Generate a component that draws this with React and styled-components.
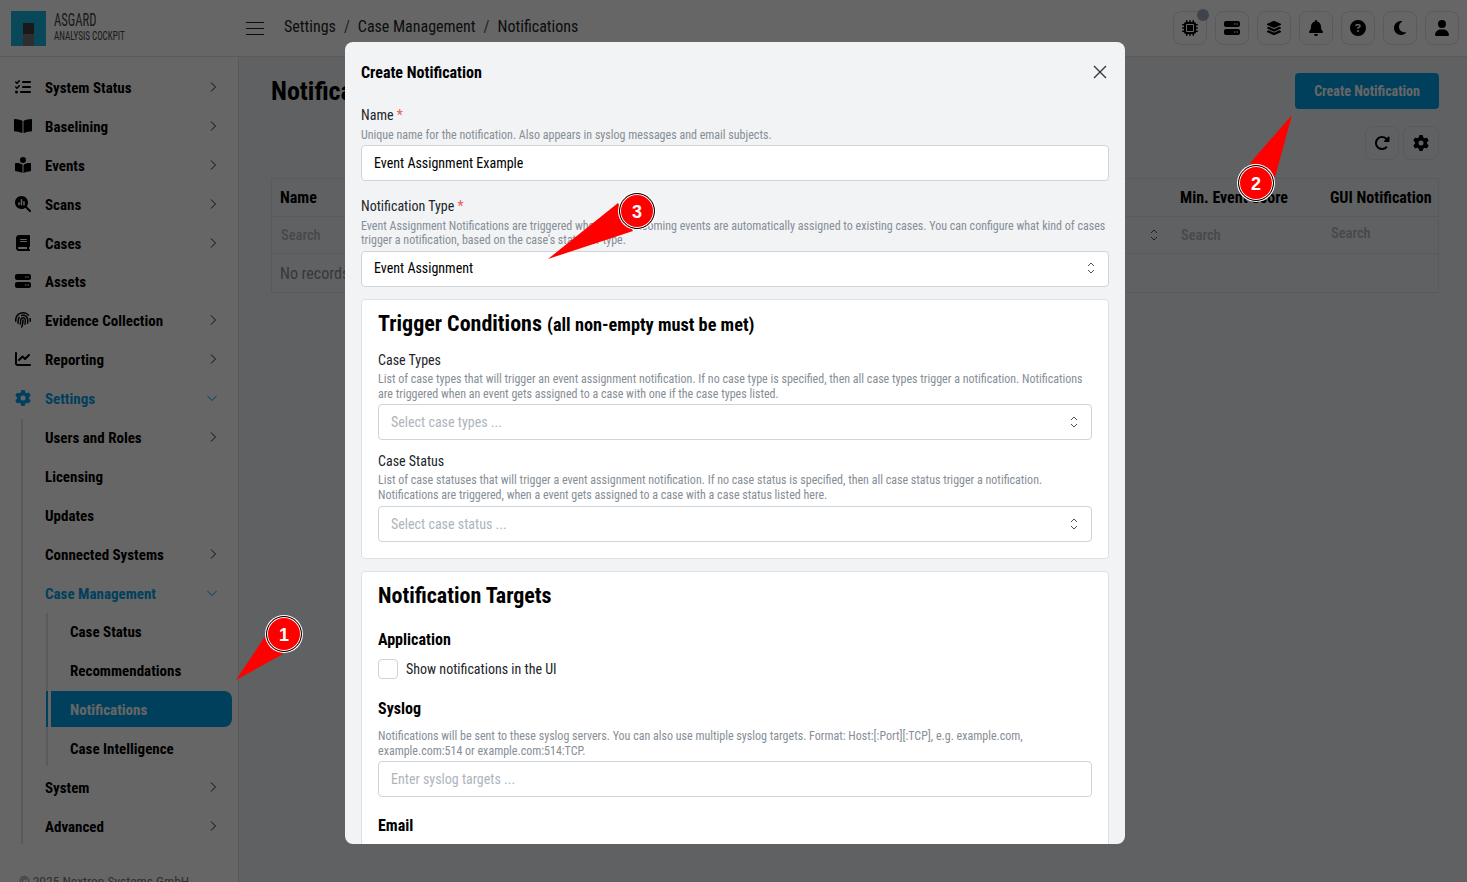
import React from "react";
import styled, { createGlobalStyle } from "styled-components";
import { FaBookOpen } from "react-icons/fa";
import {
  FaBell, FaBook, FaBookOpenReader, FaChartLine, FaGear, FaFingerprint, FaLayerGroup,
  FaListCheck, FaMagnifyingGlassChart, FaMicrochip, FaMoon, FaCircleQuestion, FaServer, FaUser, FaRotateRight,
} from "react-icons/fa6";

const primary = "#00a1e6";

const Global = createGlobalStyle`
  html, body { margin: 0; height: 882px; overflow: hidden; }
  body {
    font-family: "Roboto Condensed", Roboto, "Liberation Sans", sans-serif;
    font-stretch: 75%;
    color: #000;
    background: #f1f3f5;
  }
  * { box-sizing: border-box; }
`;

const Page = styled.div`
  position: relative;
  width: 1467px;
  height: 882px;
  overflow: hidden;
`;

const Header = styled.header`
  height: 57px;
  background: #fff;
  border-bottom: 1px solid #dee2e6;
  display: flex;
  align-items: center;
  padding: 0 8px 0 11px;
`;

const Logo = styled.div`
  width: 235px;
  display: flex;
  align-items: center;
  gap: 8px;
`;

const LogoMark = styled.svg`
  width: 35px;
  height: 35px;
  display: block;
`;

const LogoText = styled.div`
  display: flex;
  flex-direction: column;
  color: #444;
  line-height: 1;
  padding-bottom: 4px;
  transform: scaleX(0.7);
  transform-origin: left center;
  white-space: nowrap;
  .top { font-size: 18px; }
  .bottom { font-size: 13px; }
`;

const Burger = styled.div`
  width: 18px;
  height: 13px;
  border-top: 1px solid #222;
  border-bottom: 1px solid #222;
  position: relative;
  margin-right: 20px;
  &::after {
    content: "";
    position: absolute;
    left: 0;
    right: 0;
    top: 5px;
    height: 1px;
    background: #222;
  }
`;

const Crumbs = styled.nav`
  flex: 1;
  display: flex;
  gap: 8px;
  padding-bottom: 4px;
  font-size: 16px;
  color: #212529;
  span.sep { color: #555; }
`;

const Tools = styled.div`
  display: flex;
  gap: 8px;
`;

const IconButton = styled.button`
  position: relative;
  width: ${(p) => p.$w || 34}px;
  height: 34px;
  padding: 0;
  display: flex;
  align-items: center;
  justify-content: center;
  background: transparent;
  border: 1px solid #dee2e6;
  border-radius: 8px;
  color: #000;
  svg { height: 16px; width: auto; }
`;

const StatusDot = styled.span`
  position: absolute;
  top: -3px;
  right: -3px;
  width: 12px;
  height: 12px;
  border-radius: 50%;
  background: #9daabb;
`;

const Body = styled.div`
  display: flex;
  height: 825px;
`;

const Sidebar = styled.aside`
  width: 239px;
  flex: none;
  background: #fff;
  border-right: 1px solid #dee2e6;
  padding: 12px 6px 0 8px;
`;

const Row = styled.div`
  display: flex;
  align-items: center;
  height: 36px;
  margin-bottom: 2.9px;
  padding-left: ${(p) => (p.$nested ? 19 : 6)}px;
  padding-right: 14px;
  font-size: 15px;
  font-weight: 700;
  color: ${(p) => (p.$active ? "#fff" : p.$open ? primary : "#000")};
  background: ${(p) => (p.$active ? primary : "transparent")};
  border-radius: ${(p) => (p.$active ? "0 8px 8px 0" : "0")};
  span { flex: 1; padding-top: 2px; }
`;

const Lead = styled.i`
  width: 18px;
  flex: none;
  margin-right: 13px;
  display: flex;
  justify-content: center;
  color: ${(p) => (p.$open ? primary : "#000")};
  svg { height: ${(p) => p.$size || 16}px; width: ${(p) => p.$size || 16}px; }
`;

const Chevron = styled.svg`
  width: 10px;
  height: 10px;
  fill: none;
  stroke: currentColor;
  stroke-width: 1;
  color: ${(p) => (p.$open ? primary : "#222")};
  transform: ${(p) => (p.$open ? "translateX(-1px) rotate(90deg)" : "none")};
`;

const Nested = styled.div`
  margin-left: ${(p) => p.$indent}px;
  border-left: 2px solid #dee2e6;
  padding-left: 3px;
  margin-bottom: ${(p) => p.$gap || 0}px;
`;

const NestedMark = styled.i`
  position: absolute;
  left: -5px;
  top: 0;
  bottom: 0;
  width: 2px;
  background: ${primary};
`;

const ActiveWrap = styled.div`
  position: relative;
`;

const Footer = styled.div`
  margin: 29px 0 0 11px;
  font-size: 13.5px;
  color: #777;
  white-space: nowrap;
`;

const Main = styled.main`
  flex: 1;
  padding: 16px 28px 0 32px;
  min-width: 0;
`;

const TitleRow = styled.div`
  display: flex;
  justify-content: space-between;
  align-items: flex-start;
`;

const Title = styled.h1`
  margin: 0;
  padding-top: 1px;
  font-size: 26px;
  line-height: 35px;
  font-weight: 700;
`;

const PrimaryButton = styled.button`
  width: 144px;
  height: 36px;
  border: 0;
  border-radius: 4px;
  background: ${primary};
  color: #fff;
  font: inherit;
  font-size: 14px;
  font-weight: 700;
`;

const TableTools = styled.div`
  display: flex;
  justify-content: flex-end;
  gap: 4px;
  margin-top: 17px;
  margin-bottom: 18px;
`;

const Table = styled.div`
  border: 1px solid #dee2e6;
  height: 115px;
`;

const TableRow = styled.div`
  display: grid;
  grid-template-columns: 874px 26px 150px 1fr;
  height: ${(p) => p.$h}px;
  align-items: center;
  border-bottom: 1px solid #dee2e6;
  font-size: ${(p) => p.$size || 16}px;
  font-weight: ${(p) => p.$weight || 400};
  color: ${(p) => p.$color || "#000"};
  white-space: nowrap;
  svg { margin-left: 2px; }
`;

const Cell = styled.div`
  padding-left: ${(p) => p.$pad || 8}px;
  padding-bottom: ${(p) => p.$lift || 0}px;
`;

const Empty = styled.div`
  padding-left: 8px;
  line-height: 39px;
  font-size: 16px;
  color: #868e96;
`;

const Overlay = styled.div`
  position: absolute;
  inset: 0;
  background: rgba(0, 0, 0, 0.6);
`;

const Modal = styled.section`
  position: absolute;
  left: 345px;
  top: 42px;
  width: 780px;
  height: 802px;
  background: #f1f3f5;
  border-radius: 8px;
  overflow: hidden;
  padding: 0 16px;
`;

const ModalHead = styled.div`
  height: 63px;
  padding-bottom: 3px;
  display: flex;
  align-items: center;
  justify-content: space-between;
  font-size: 16px;
  font-weight: 700;
`;

const CloseIcon = styled.svg`
  width: 14px;
  height: 14px;
  margin-right: 2px;
  stroke: #343a40;
  stroke-width: 1.4;
`;

const Field = styled.div`
  margin-bottom: ${(p) => p.$mb ?? 0}px;
`;

const Label = styled.div`
  font-size: 14px;
  line-height: 20px;
  color: #212529;
  em { color: #fa5252; font-style: normal; }
`;

const Desc = styled.div`
  font-size: 12px;
  line-height: 14.5px;
  color: #868e96;
  margin-top: ${(p) => p.$top ?? 2.5}px;
  margin-bottom: ${(p) => p.$bottom ?? 3}px;
`;

const Input = styled.div`
  height: 36px;
  padding: 0 12px 1px;
  display: flex;
  align-items: center;
  justify-content: space-between;
  background: #fff;
  border: 1px solid #ced4da;
  border-radius: 4px;
  font-size: 14px;
  color: ${(p) => (p.$placeholder ? "#adb5bd" : "#000")};
`;

const Updown = styled.svg`
  width: 12px;
  height: 14px;
  flex: none;
  fill: none;
  stroke: #495057;
  stroke-width: 1;
  margin-right: -1px;
`;

const Card = styled.div`
  background: #fff;
  border: 1px solid #dee2e6;
  border-radius: 4px;
  padding: 8px 16px 16px;
  margin-top: 12px;
`;

const CardTitle = styled.h2`
  margin: 0 0 ${(p) => p.$mb}px;
  font-size: 22px;
  line-height: 32px;
  font-weight: 700;
  small { font-size: 18.3px; font-weight: 700; }
`;

const SubTitle = styled.h3`
  margin: ${(p) => p.$top || 0}px 0 ${(p) => p.$mb || 0}px;
  font-size: 16px;
  line-height: 22px;
  font-weight: 700;
`;

const CheckRow = styled.label`
  display: flex;
  align-items: center;
  gap: 8px;
  font-size: 14px;
  margin-bottom: 19px;
  color: #212529;
`;

const CheckBox = styled.span`
  width: 20px;
  height: 20px;
  background: #fff;
  border: 1px solid #ced4da;
  border-radius: 4px;
`;

const Pointer = styled.svg`
  position: absolute;
  left: 0;
  top: 0;
  width: 1467px;
  height: 882px;
  pointer-events: none;
`;

const Badge = styled.div`
  position: absolute;
  left: ${(p) => p.$x - 18}px;
  top: ${(p) => p.$y - 18}px;
  width: 36px;
  height: 36px;
  padding-top: 2px;
  border-radius: 50%;
  background: #f00;
  border: 1px solid #000;
  box-shadow: inset 0 0 0 1px #fff, 0 0 0 1px #fff;
  color: #fff;
  font-family: "Liberation Sans", sans-serif;
  font-stretch: 100%;
  font-size: 18px;
  font-weight: 700;
  display: flex;
  align-items: center;
  justify-content: center;
`;

function Arrow({ open }) {
  return (
    <Chevron viewBox="0 0 10 10" $open={open}>
      <path d="M3 0.5 L7.5 5 L3 9.5" />
    </Chevron>
  );
}

function Item({ icon: Icon, size, label, arrow, open, nested, active }) {
  return (
    <Row $open={open} $nested={nested} $active={active}>
      {Icon && <Lead $open={open} $size={size}><Icon /></Lead>}
      <span>{label}</span>
      {arrow && <Arrow open={open} />}
    </Row>
  );
}

const UpDownIcon = () => (
  <Updown viewBox="0 0 12 14">
    <path d="M3 5 L6 2 L9 5 M3 9 L6 12 L9 9" />
  </Updown>
);

export default function App() {
  return (
    <Page>
      <Global />
      <Header>
        <Logo>
          <LogoMark viewBox="0 0 35 35">
            <rect width="35" height="35" fill="#17b4dc" />
            <rect x="12" y="12" width="11" height="11" fill="#404040" />
            <rect x="12" y="23" width="11" height="12" fill="#737373" />
          </LogoMark>
          <LogoText>
            <div className="top">ASGARD</div>
            <div className="bottom">ANALYSIS COCKPIT</div>
          </LogoText>
        </Logo>
        <Burger />
        <Crumbs>
          <span>Settings</span><span className="sep">/</span>
          <span>Case Management</span><span className="sep">/</span>
          <span>Notifications</span>
        </Crumbs>
        <Tools>
          <IconButton><FaMicrochip /><StatusDot /></IconButton>
          <IconButton><FaServer /></IconButton>
          <IconButton><FaLayerGroup /></IconButton>
          <IconButton><FaBell /></IconButton>
          <IconButton><FaCircleQuestion /></IconButton>
          <IconButton><FaMoon /></IconButton>
          <IconButton><FaUser /></IconButton>
        </Tools>
      </Header>
      <Body>
        <Sidebar>
          <Item icon={FaListCheck} label="System Status" arrow />
          <Item icon={FaBookOpen} size={18} label="Baselining" arrow />
          <Item icon={FaBookOpenReader} label="Events" arrow />
          <Item icon={FaMagnifyingGlassChart} label="Scans" arrow />
          <Item icon={FaBook} label="Cases" arrow />
          <Item icon={FaServer} label="Assets" />
          <Item icon={FaFingerprint} label="Evidence Collection" arrow />
          <Item icon={FaChartLine} label="Reporting" arrow />
          <Item icon={FaGear} label="Settings" arrow open />
          <Nested $indent={13}>
            <Item nested label="Users and Roles" arrow />
            <Item nested label="Licensing" />
            <Item nested label="Updates" />
            <Item nested label="Connected Systems" arrow />
            <Item nested label="Case Management" arrow open />
            <Nested $indent={20} $gap={2.9}>
              <Item nested label="Case Status" />
              <Item nested label="Recommendations" />
              <ActiveWrap>
                <NestedMark />
                <Item nested label="Notifications" active />
              </ActiveWrap>
              <Item nested label="Case Intelligence" />
            </Nested>
            <Item nested label="System" arrow />
            <Item nested label="Advanced" arrow />
          </Nested>
          <Footer>© 2025 Nextron Systems GmbH</Footer>
        </Sidebar>
        <Main>
          <TitleRow>
            <Title>Notifications</Title>
            <PrimaryButton>Create Notification</PrimaryButton>
          </TitleRow>
          <TableTools>
            <IconButton><FaRotateRight /></IconButton>
            <IconButton $w={36}><FaGear /></IconButton>
          </TableTools>
          <Table>
            <TableRow $h={38} $weight={700}>
              <Cell>Name</Cell><div /><Cell>Min. Event Score</Cell><Cell>GUI Notification</Cell>
            </TableRow>
            <TableRow $h={37} $size={14.5} $weight={500} $color="#adb5bd">
              <Cell $pad={9}>Search</Cell>
              <UpDownIcon />
              <Cell $pad={9}>Search</Cell>
              <Cell $pad={9} $lift={3}>Search</Cell>
            </TableRow>
            <Empty>No records found</Empty>
          </Table>
        </Main>
      </Body>
      <Overlay />
      <Modal>
        <ModalHead>
          Create Notification
          <CloseIcon viewBox="0 0 14 14"><path d="M1 1 L13 13 M13 1 L1 13" /></CloseIcon>
        </ModalHead>
        <Field $mb={15}>
          <Label>Name <em>*</em></Label>
          <Desc>Unique name for the notification. Also appears in syslog messages and email subjects.</Desc>
          <Input>Event Assignment Example</Input>
        </Field>
        <Field>
          <Label>Notification Type <em>*</em></Label>
          <Desc>Event Assignment Notifications are triggered when a new incoming events are automatically assigned to existing cases. You can configure what kind of cases trigger a notification, based on the case's status or type.</Desc>
          <Input>Event Assignment<UpDownIcon /></Input>
        </Field>
        <Card>
          <CardTitle $mb={9}>Trigger Conditions <small>(all non-empty must be met)</small></CardTitle>
          <Field $mb={10.5}>
            <Label>Case Types</Label>
            <Desc>List of case types that will trigger an event assignment notification. If no case type is specified, then all case types trigger a notification. Notifications are triggered when an event gets assigned to a case with one if the case types listed.</Desc>
            <Input $placeholder>Select case types ...<UpDownIcon /></Input>
          </Field>
          <Field>
            <Label>Case Status</Label>
            <Desc $bottom={4}>List of case statuses that will trigger a event assignment notification. If no case status is specified, then all case status trigger a notification. Notifications are triggered, when a event gets assigned to a case with a case status listed here.</Desc>
            <Input $placeholder>Select case status ...<UpDownIcon /></Input>
          </Field>
        </Card>
        <Card>
          <CardTitle $mb={17}>Notification Targets</CardTitle>
          <SubTitle $mb={8}>Application</SubTitle>
          <CheckRow><CheckBox />Show notifications in the UI</CheckRow>
          <SubTitle>Syslog</SubTitle>
          <Desc $top={9} $bottom={3}>Notifications will be sent to these syslog servers. You can also use multiple syslog targets. Format: Host:[:Port][:TCP], e.g. example.com, example.com:514 or example.com:514:TCP.</Desc>
          <Input $placeholder>Enter syslog targets ...</Input>
          <SubTitle $top={18}>Email</SubTitle>
        </Card>
      </Modal>
      <Pointer viewBox="0 0 1467 882">
        <polygon points="236,680 266,635 283,654" fill="#f00" />
        <polygon points="1292,115 1250,163 1275,177" fill="#f00" />
        <polygon points="548,259 618,203 633,231" fill="#f00" />
      </Pointer>
      <Badge $x={284} $y={634}>1</Badge>
      <Badge $x={1256} $y={183}>2</Badge>
      <Badge $x={637} $y={211}>3</Badge>
    </Page>
  );
}
